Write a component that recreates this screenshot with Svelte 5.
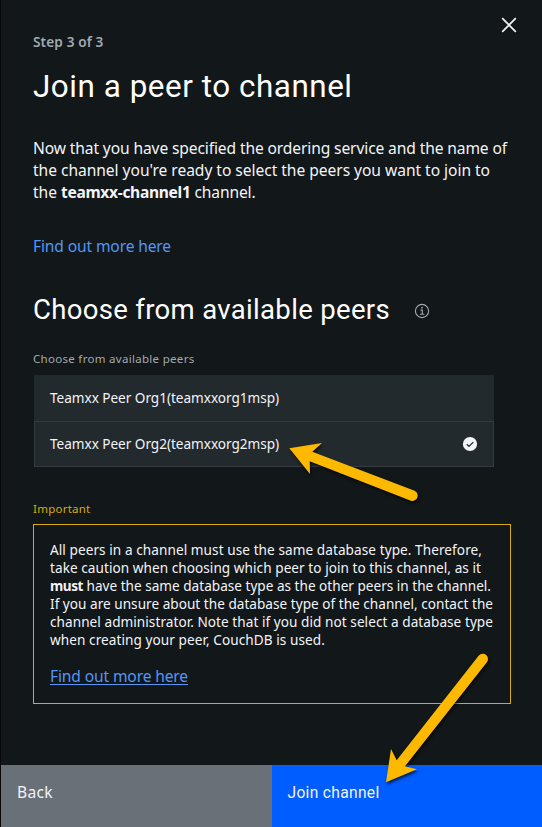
<script>
  const intro = [
    [{ t: 'Now that you have specified the ordering service and the name of', w: 474 }],
    [{ t: "the channel you're ready to select the peers you want to join to", w: 457 }],
    [{ t: 'the ', w: 28 }, { t: 'teamxx-channel1', w: 129.5, b: true }, { t: ' channel.', w: 65 }]
  ];
  const notice = [
    [{ t: 'All peers in a channel must use the same database type. Therefore,', w: 432 }],
    [{ t: 'take caution when choosing which peer to join to this channel, as it', w: 431 }],
    [{ t: 'must', w: 33, b: true }, { t: ' have the same database type as the other peers in the channel.', w: 408 }],
    [{ t: 'If you are unsure about the database type of the channel, contact the', w: 443 }],
    [{ t: 'channel administrator. Note that if you did not select a database type', w: 443 }],
    [{ t: 'when creating your peer, CouchDB is used.', w: 275 }]
  ];
  const peers = [
    { name: 'Teamxx Peer Org1(teamxxorg1msp)', selected: false },
    { name: 'Teamxx Peer Org2(teamxxorg2msp)', selected: true }
  ];

  // Tracks the text so that it fills the given advance width.
  function fit(node, width) {
    const natural = node.getBoundingClientRect().width;
    node.style.letterSpacing = (width - natural) / node.textContent.length + 'px';
  }
</script>

{#snippet lines(rows)}
  {#each rows as row}
    <span class="line">{#each row as s}<span class="seg" class:bold={s.b} use:fit={s.w}>{s.t}</span>{/each}</span>
  {/each}
{/snippet}

<div class="panel">
  <main>
    <header>
      <div class="step"><span class="seg" use:fit={70.5}>Step 3 of 3</span></div>
      <button class="close" aria-label="Close">
        <svg width="16" height="16" viewBox="0 0 16 16"><path d="M1.2 1.2 14.8 14.8M14.8 1.2 1.2 14.8" stroke="#f2f4f8" stroke-width="1.7" fill="none" /></svg>
      </button>
    </header>
    <h1><span class="seg" use:fit={319.5}>Join a peer to channel</span></h1>
    <p class="intro">{@render lines(intro)}</p>
    <a class="more" href="#top"><span class="seg" use:fit={138}>Find out more here</span></a>
    <div class="heading">
      <h2><span class="seg" use:fit={357}>Choose from available peers</span></h2>
      <svg width="16" height="16" viewBox="0 0 16 16" fill="none" stroke="#a2a9b0">
        <circle cx="8" cy="8" r="6.6" stroke-width="1.1" />
        <path d="M6.4 7.1H8.3V11M6 11.3H10.3" stroke-width="1.1" />
        <circle cx="8" cy="4.7" r=".85" fill="#a2a9b0" stroke="none" />
      </svg>
    </div>
    <div class="label"><span class="seg" use:fit={161.5}>Choose from available peers</span></div>
    <div class="list">
      {#each peers as p}
        <div class="row" class:selected={p.selected}>
          <span class="seg" use:fit={229}>{p.name}</span>
          {#if p.selected}
            <svg width="16" height="16" viewBox="0 0 16 16">
              <circle cx="8" cy="8" r="7.1" fill="#f2f4f8" />
              <path d="M4.8 8.2 7 10.4 11.3 6.1" fill="none" stroke="#21272a" stroke-width="1.3" />
            </svg>
          {/if}
        </div>
      {/each}
    </div>
    <div class="important"><span class="seg" use:fit={57.5}>Important</span></div>
    <section class="notice">
      <p>{@render lines(notice)}</p>
      <a class="under" href="#top"><span class="seg" use:fit={138}>Find out more here</span></a>
    </section>
  </main>
  <footer>
    <button class="back"><span class="seg" use:fit={36}>Back</span></button>
    <button class="join"><span class="seg" use:fit={92}>Join channel</span></button>
  </footer>
  <svg class="arrows" width="542" height="827" viewBox="0 0 542 827" fill="#fdb900">
    <path d="M289.3 448.3 322 443 312.3 451.7 414.6 490.8A5.3 5.3 0 0 1 410.9 500.7L309.7 461.2 310 474Z" />
    <path d="M386 782.3 391 749 396.7 760.2 478.6 655.8A5.2 5.2 0 0 1 486.9 662.2L405 766.3 417 769.3Z" />
  </svg>
</div>

<style>
  :global(body) { margin: 0; background: #121719; }
  .panel {
    position: relative;
    box-sizing: border-box;
    width: 542px;
    height: 827px;
    display: flex;
    flex-direction: column;
    border-left: 1px solid #050708;
    background: #121719;
    color: #f2f4f8;
    font-family: "Noto Sans", Roboto, sans-serif;
    overflow: hidden;
  }
  main { flex: 1; display: flex; flex-direction: column; padding: 0 31px 0 32px; }
  .seg { display: inline-block; white-space: pre; font-kerning: normal; }
  .line { display: block; white-space: nowrap; }
  .bold { font-weight: 700; }
  header { display: flex; justify-content: space-between; height: 60px; margin-right: -6px; }
  .step { padding-top: 33px; font-size: 13.6px; line-height: 18px; font-weight: 600; color: #a2a9b0; }
  button { border: 0; padding: 0; font: inherit; color: inherit; background: none; text-align: left; }
  .close { width: 16px; height: 16px; margin-top: 17px; }
  svg { display: block; }
  h1, h2, p { margin: 0; font-weight: 400; }
  h1 { height: 77px; font-family: Roboto, sans-serif; font-size: 31.4px; line-height: 54px; color: #fff; }
  .intro { font-size: 15.6px; line-height: 22px; height: 98px; }
  a { color: #5596f6; text-decoration: none; }
  .more { height: 50px; font-size: 15.6px; line-height: 22px; }
  .heading { display: flex; align-items: center; height: 50px; gap: 24px; color: #fff; }
  h2 { font-family: Roboto, sans-serif; font-size: 27.5px; line-height: 48px; }
  .heading svg { margin-top: 2px; }
  .label { height: 25px; padding-top: 15px; font-size: 11.5px; line-height: 18px; color: #a2a9b0; }
  .list { width: 460px; margin-left: 1px; height: 92px; background: #232a2d; }
  .row { box-sizing: border-box; display: flex; align-items: center; justify-content: space-between; height: 46px; padding: 0 16px; font-size: 13.6px; }
  .row .seg { margin-top: -2px; }
  .row.selected { border: 1px solid #343a3f; padding: 0 15px; }
  .important { height: 24px; padding-top: 33px; font-size: 11.5px; line-height: 18px; color: #d8ab0a; }
  .notice { box-sizing: border-box; height: 180px; padding: 16px; border: 1px solid #d8ab0a; font-size: 13.6px; line-height: 18px; }
  .under { display: inline-block; margin-top: 18px; font-size: 15.6px; line-height: 19px; height: 17px; border-bottom: 1px solid #5596f6; }
  footer { display: flex; height: 62px; }
  footer button { box-sizing: border-box; flex: 1; padding: 16px; font-size: 15.6px; line-height: 22px; display: flex; align-items: flex-start; }
  .back { background: #697077; }
  .join { background: #005dff; }
  footer .join { font-family: Roboto, sans-serif; padding-top: 17px; }
  .arrows { position: absolute; left: -1px; top: 0; pointer-events: none; filter: drop-shadow(1px 2px 1.5px rgba(0, 0, 0, 0.7)); }
</style>
